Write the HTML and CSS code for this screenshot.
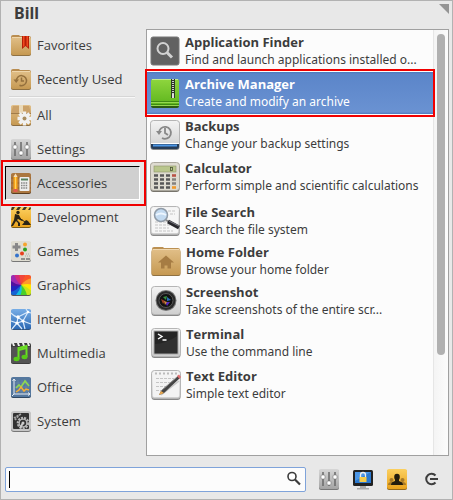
FILE: index.html
```html
<!DOCTYPE html>
<html lang="en">
<head>
<meta charset="utf-8">
<title>Applications</title>
<link rel="stylesheet" href="styles.css">
</head>
<body>
<svg class="defs" aria-hidden="true">
  <defs>
    <linearGradient id="tan" x2="0" y2="1"><stop stop-color="#e1bf88"/><stop offset="1" stop-color="#c69952"/></linearGradient>
    <linearGradient id="silver" x2="0" y2="1"><stop stop-color="#f4f4f4"/><stop offset="1" stop-color="#cfcfcf"/></linearGradient>
    <linearGradient id="grey" x2="0" y2="1"><stop stop-color="#d6d6d6"/><stop offset="1" stop-color="#a4a4a4"/></linearGradient>
    <linearGradient id="amber" x2="0" y2="1"><stop stop-color="#fbd060"/><stop offset="1" stop-color="#e9a21c"/></linearGradient>
    <linearGradient id="sky" x2="0" y2="1"><stop stop-color="#78aee6"/><stop offset="1" stop-color="#2c69b4"/></linearGradient>
    <linearGradient id="green" x2="0" y2="1"><stop stop-color="#8fd63e"/><stop offset="1" stop-color="#5cb41c"/></linearGradient>
    <clipPath id="round"><rect x="1" y="1" width="20" height="20" rx="2"/></clipPath>
  </defs>
  <symbol id="folder" viewBox="0 0 22 22">
    <path d="M1 3q0-2 2-2h6l1 1h9q2 0 2 2v5H1z" fill="#b98d50"/>
    <rect x="1" y="4" width="20" height="18" rx="2" fill="#8f7142"/>
    <rect x="1" y="3" width="20" height="18" rx="2" fill="url(#tan)"/>
    <path d="M2 3.500h18" stroke="#efd6ab"/>
  </symbol>
  <symbol id="mixer" viewBox="0 0 22 22">
    <rect x="1" y="2" width="20" height="20" rx="2" fill="#777"/>
    <rect x="1" y="1" width="20" height="20" rx="2" fill="url(#grey)"/>
    <path d="M5 4v14M11 4v14M17 4v14" stroke="#6a6a6a" stroke-width="1.500"/>
    <g fill="#fff" stroke="#777" stroke-width=".6"><rect x="3" y="7" width="4" height="4" rx="1"/><rect x="9" y="13" width="4" height="4" rx="1"/><rect x="15" y="7" width="4" height="4" rx="1"/></g>
  </symbol>
  <symbol id="tile" viewBox="0 0 30 30">
    <rect x=".5" y="1" width="29" height="29" rx="3" fill="#888"/>
    <rect x=".5" y=".5" width="29" height="28" rx="3" fill="url(#silver)" stroke="#b5b5b5"/>
  </symbol>
</svg>

<div class="window">
  <header class="top">
    <h1 class="user">Bill</h1>
    <svg class="grip" viewBox="0 0 10 10" aria-hidden="true"><path d="M0 0h10v10z" fill="#949494"/></svg>
  </header>

  <main class="content">
    <nav class="categories" aria-label="Categories">
      <button class="category" type="button">
        <svg class="cat-icon" viewBox="0 0 22 22"><use href="#folder"/><path d="M12 2h7v13l-3.500-3-3.500 3z" fill="#b51e08"/><path d="M13 2h1.500v10l-1.500 1zM16.500 2H18v11l-1.500-1z" fill="#f0491d"/></svg>
        Favorites</button>
      <button class="category" type="button">
        <svg class="cat-icon" viewBox="0 0 22 22"><use href="#folder"/><path d="M6.500 13a5 5 0 1 1 3 4.200" fill="none" stroke="#94703d" stroke-width="1.500"/><path d="M3.500 11.500h5.500L6.200 15z" fill="#94703d"/><path d="M11.500 9.500v3.500H14" fill="none" stroke="#94703d" stroke-width="1.500"/></svg>
        Recently Used</button>
      <hr class="separator">
      <button class="category" type="button">
        <svg class="cat-icon" viewBox="0 0 22 22"><rect x="1" y="2" width="20" height="20" rx="2" fill="#8b6c40"/><rect x="1" y="1" width="20" height="20" rx="2" fill="url(#tan)"/><path d="M1 9l2-7h16l2 7z" fill="#cba26a"/><path d="M9 1h4v10H9z" fill="#ead9b8"/><path d="M1 9.500h20" stroke="#a17c49"/><g transform="translate(14.500 14.500)"><g stroke="#f1f1f1" stroke-width="3.400"><path d="M0-7V7M-7 0H7M-5-5L5 5M5-5L-5 5"/></g><circle r="5" fill="#f1f1f1"/><circle r="2" fill="#a98d60"/></g></svg>
        All</button>
      <button class="category" type="button">
        <svg class="cat-icon" viewBox="0 0 22 22"><use href="#mixer"/></svg>
        Settings</button>
      <button class="category selected" type="button" aria-pressed="true">
        <svg class="cat-icon" viewBox="0 0 22 22"><rect x="1" y="2" width="20" height="20" rx="2" fill="#5c3c1c"/><rect x="1" y="1" width="20" height="20" rx="2" fill="#ab7740"/><path d="M1 6h20M1 11h20M1 16h20" stroke="#946331"/><path d="M3.500 5L5.500 1.500 7.500 5v13h-4z" fill="#f8a51b"/><path d="M5.500 5v13" stroke="#ffd15c"/><path d="M3.500 5l2-3.500 2 3.500z" fill="#f4dfbc"/><rect x="3.500" y="17" width="4" height="3" fill="#df5a4e"/><rect x="9.500" y="5" width="10" height="14" rx="1" fill="#eee"/><path d="M11 7.500h7" stroke="#54805c" stroke-width="2"/><path d="M11 11h7M11 13.500h7M11 16h7" stroke="#858585" stroke-width="1.300" stroke-dasharray="1.500 .8"/></svg>
        Accessories</button>
      <button class="category" type="button">
        <svg class="cat-icon" viewBox="0 0 22 22"><rect x="1" y="1" width="20" height="21" rx="2" fill="#7a5b16"/><rect x="1" y="1" width="20" height="20" rx="2" fill="url(#amber)"/><path d="M2 1h3L3 4H1zM8 1h3L9 4H6zM14 1h3l-2 3h-3zM20 1l1 1-1 2h-2z" fill="#41381f"/><circle cx="8" cy="6.500" r="1.700" fill="#292416"/><path d="M5 8l4 1 2 4 2 1-1 1-4-2-1 1 3 3v3H8v-3l-2-2-3 5H1l3-6z" fill="#292416"/><path d="M8 11l7 5" stroke="#292416"/><path d="M12 19l4-5 2 1 3 4z" fill="#292416"/></svg>
        Development</button>
      <button class="category" type="button">
        <svg class="cat-icon" viewBox="0 0 22 22"><rect x="1" y="2" width="20" height="20" rx="2" fill="#777"/><rect x="1" y="1" width="20" height="20" rx="2" fill="#dfddd2"/><path d="M6.500 3v8M2.500 7h8" stroke="#888" stroke-width="3"/><circle cx="15" cy="4.500" r="2" fill="#f6a42c"/><circle cx="15" cy="9.500" r="2" fill="#28a020"/><circle cx="12" cy="13.500" r="2" fill="#e8401c"/><circle cx="7" cy="15.500" r="2" fill="#3474cc"/><path d="M16 14h4M15 16h5" stroke="#aaa" stroke-dasharray="1 1"/><path d="M11 19h4M16 19h4" stroke="#777" stroke-width="1.500"/></svg>
        Games</button>
      <button class="category" type="button">
        <svg class="cat-icon" viewBox="0 0 22 22"><rect x="1" y="2" width="20" height="20" rx="2" fill="#555"/><g clip-path="url(#round)"><path d="M11 11Q8 5 9 0h7z" fill="#f1453b"/><path d="M11 11Q13 4 16 0h6v4z" fill="#fa5428"/><path d="M11 11q5-6 11-7v7z" fill="#ff9a2b"/><path d="M11 11q7-2 11 0v7z" fill="#ffe600"/><path d="M11 11q6 1 11 7v4h-5z" fill="#c7e51a"/><path d="M11 11q5 4 6 11h-7z" fill="#49cf28"/><path d="M11 11q2 5-1 11H5z" fill="#16bfdc"/><path d="M11 11q-1 6-6 11H0v-4z" fill="#1562d4"/><path d="M11 11Q6 17 0 18v-7z" fill="#2423bd"/><path d="M11 11Q4 13 0 11V6z" fill="#5112a0"/><path d="M11 11Q4 10 0 6V0h4z" fill="#9b2bb3"/><path d="M11 11Q6 7 4 0h5z" fill="#d42a7a"/></g></svg>
        Graphics</button>
      <button class="category" type="button">
        <svg class="cat-icon" viewBox="0 0 22 22"><rect x="1" y="2" width="20" height="20" rx="2" fill="#31547f"/><rect x="1" y="1" width="20" height="20" rx="2" fill="url(#sky)"/><g fill="none" stroke="#d9eafc" stroke-width="1.200"><path d="M1 5q4 4 7 4l10-5M8 9l5 4 8 3M8 9l-1 6-5 6M18 4l-5 9-6 2-6-2M13 13l2 8M18 4l-2-3M7 15l5 6M18 4l3 1"/></g><g fill="#fff"><circle cx="8" cy="9" r="1.700"/><circle cx="18" cy="4" r="1.300"/><circle cx="13" cy="13" r="1.600"/><circle cx="7" cy="15" r="1.600"/></g></svg>
        Internet</button>
      <button class="category" type="button">
        <svg class="cat-icon" viewBox="0 0 22 22"><rect x="1" y="1" width="20" height="21" rx="2" fill="#3d3d3d"/><rect x="1" y="5" width="20" height="16" rx="1" fill="#535353"/><path d="M2 1h2l1 3H3zM7 1h2l1 3H8zM12 1h2l1 3h-2zM17 1h2l1 3h-2z" fill="#eee"/><path d="M8.500 17V6l8-2v11" fill="none" stroke="#6ae022" stroke-width="2"/><path d="M8.500 8l8-2" stroke="#6ae022" stroke-width="2"/><ellipse cx="6.500" cy="17" rx="3" ry="2.200" fill="#57cb18"/><ellipse cx="14.500" cy="15" rx="3" ry="2.200" fill="#57cb18"/></svg>
        Multimedia</button>
      <button class="category" type="button">
        <svg class="cat-icon" viewBox="0 0 22 22"><rect x="1" y="2" width="20" height="20" rx="2" fill="#304863"/><rect x="1" y="1" width="20" height="20" rx="2" fill="#54779e"/><path d="M8 4v14M12 4v14M16 4v14M4 7h15M4 11h15M4 15h15" stroke="#6b8aac" stroke-width=".7"/><path d="M4 3v15h16M2.500 5L4 3l1.500 2M18 16.500l2 1.500-2 1.500M4 18l-2 2" fill="none" stroke="#e7edf3"/><path d="M6 12l3-3 2 2 4-6 4 5" fill="none" stroke="#8fd752" stroke-width="1.700"/><path d="M6 16l3-2 2-3 3 4 2-2 3 1" fill="none" stroke="#f7ae34" stroke-width="1.500"/></svg>
        Office</button>
      <button class="category" type="button">
        <svg class="cat-icon" viewBox="0 0 22 22"><rect x="1" y="2" width="20" height="20" rx="3" fill="#777"/><rect x="1" y="1" width="20" height="20" rx="3" fill="#c6c6c6"/><rect x="3" y="3" width="16" height="16" rx="1" fill="#333"/><circle cx="13" cy="13" r="5" fill="none" stroke="#b5b5b5" stroke-width="2.600" stroke-dasharray="2 1"/><circle cx="13" cy="13" r="3.800" fill="none" stroke="#b5b5b5" stroke-width="1.300"/><path d="M13 13l-3 5" stroke="#ccc" stroke-width="2"/><circle cx="13" cy="13" r="1.500" fill="#ccc"/><path d="M4 8l7-4M5 10l4-5" stroke="#a5a5a5" stroke-width="1.800" stroke-dasharray="2 1"/></svg>
        System</button>
    </nav>

    <section class="panel" aria-label="Accessories">
      <div class="apps">
        <button class="app" type="button">
          <svg class="app-icon" viewBox="0 0 30 30"><rect x="1" y="1" width="28" height="28" rx="2" fill="#626262" stroke="#777"/><circle cx="13" cy="12.500" r="5.500" fill="none" stroke="#d2d2d2" stroke-width="2"/><path d="M17 16.500l5 5" stroke="#d2d2d2" stroke-width="3"/></svg>
          <span class="label"><strong>Application Finder</strong><span>Find and launch applications installed o...</span></span></button>
        <button class="app active" type="button">
          <svg class="app-icon" viewBox="0 0 30 30"><rect x="1" y="2" width="28" height="28" rx="2" fill="#2c5c11"/><rect x="1" y="1" width="28" height="27" rx="2" fill="url(#green)"/><path d="M2 1.500h26" stroke="#c5ed91"/><path d="M1 23.500h28M1 26.500h28" stroke="#3f8a13"/><path d="M1 24.500h28M1 27.500h28" stroke="#94d750"/><path d="M21 1h4v19h-4z" fill="#2b3b24"/><path d="M23 1v16" stroke="#ccc" stroke-width="2" stroke-dasharray="1 1"/><rect x="22" y="16" width="2" height="4" fill="#ddd"/></svg>
          <span class="label"><strong>Archive Manager</strong><span>Create and modify an archive</span></span></button>
        <button class="app" type="button">
          <svg class="app-icon" viewBox="0 0 30 30"><use href="#tile"/><path d="M1 24h28v3q0 2-2 2H3q-2 0-2-2z" fill="#263d59"/><path d="M3 25.500h24" stroke="#4c97e6" stroke-width="2"/><path d="M1 23.500h28" stroke="#fff"/><path d="M9 13a6 6 0 1 1 3 5" fill="none" stroke="#888" stroke-width="1.800"/><path d="M6 11h6l-3 4z" fill="#888"/><path d="M15 8v5l3 2" fill="none" stroke="#888" stroke-width="1.800"/></svg>
          <span class="label"><strong>Backups</strong><span>Change your backup settings</span></span></button>
        <button class="app" type="button">
          <svg class="app-icon" viewBox="0 0 30 30"><rect x=".5" y="1" width="29" height="29" rx="3" fill="#77746c"/><rect x=".5" y=".5" width="29" height="28" rx="3" fill="#dedbd0" stroke="#aaa79d"/><rect x="4" y="4" width="22" height="6" fill="#b9c68c" stroke="#8c9369" stroke-width=".6"/><rect x="20.500" y="5.500" width="2" height="3" fill="none" stroke="#4b5438" stroke-width=".8"/><path d="M4 13.500h16M4 17.500h16M4 21.500h16M4 25.500h16" stroke="#575757" stroke-width="2.600" stroke-dasharray="4 2"/><path d="M22 13.500h4" stroke="#b95346" stroke-width="2.600"/><path d="M22 17.500h4M22 21.500h4" stroke="#85827d" stroke-width="2.600"/><path d="M22 25.500h4" stroke="#f19a2b" stroke-width="2.600"/></svg>
          <span class="label"><strong>Calculator</strong><span>Perform simple and scientific calculations</span></span></button>
        <button class="app" type="button">
          <svg class="app-icon" viewBox="0 0 30 30"><use href="#tile"/><rect x="2" y="2" width="26" height="25" rx="1" fill="#f6f6f6"/><path d="M5 16h12M5 19h18M5 22h14M5 25h18M18 5h7M20 8h5" stroke="#c4c4c4" stroke-dasharray="3 1"/><circle cx="11" cy="9" r="6.500" fill="#c3daf0" stroke="#909ba7" stroke-width="1.500"/><path d="M6 9q5-3 10 0" fill="none" stroke="#edf6ff" stroke-width="2"/><path d="M16 14l3 2" stroke="#888" stroke-width="2"/><path d="M18 15.500l11 6" stroke="#28282d" stroke-width="4"/><path d="M19 15l10 5" stroke="#7e7e86"/></svg>
          <span class="label"><strong>File Search</strong><span>Search the file system</span></span></button>
        <button class="app shifted" type="button">
          <svg class="app-icon" viewBox="0 0 30 30"><path d="M1 3q0-2 2-2h9l1 1h14q2 0 2 2v5H1z" fill="#bb9052"/><rect x=".5" y="4" width="29" height="26" rx="2" fill="#8f7142"/><rect x=".5" y="3" width="29" height="26" rx="2" fill="url(#tan)"/><path d="M2 3.500h26" stroke="#efd7af"/><path d="M15 9.500l8 7h-3v6h-3.500v-3h-3v3H10v-6H7z" fill="#a67c43"/></svg>
          <span class="label"><strong>Home Folder</strong><span>Browse your home folder</span></span></button>
        <button class="app shifted" type="button">
          <svg class="app-icon" viewBox="0 0 30 30"><use href="#tile"/><circle cx="15" cy="14.500" r="10.500" fill="#777"/><circle cx="15" cy="14.500" r="9.500" fill="#292929"/><circle cx="15" cy="14.500" r="7" fill="#111" stroke="#555"/><path d="M12 11l4-1-1 4z" fill="#388f43"/><path d="M16 11l4 3-4 1z" fill="#286eb5"/><path d="M10 13l4 2-2 3z" fill="#9b3f25"/><path d="M14 16l5 0-3 4z" fill="#5529bb"/><path d="M13 15l3 1-2 3z" fill="#d28b39"/></svg>
          <span class="label"><strong>Screenshot</strong><span>Take screenshots of the entire scr...</span></span></button>
        <button class="app shifted" type="button">
          <svg class="app-icon" viewBox="0 0 30 30"><use href="#tile"/><rect x="3" y="3" width="24" height="23" fill="#252525" stroke="#aaa"/><path d="M4 16q12-1 22-8v17H4z" fill="#303030"/><path d="M7 6l4 2.500L7 11M11.500 12h4" fill="none" stroke="#fff" stroke-width="1.400"/></svg>
          <span class="label"><strong>Terminal</strong><span>Use the command line</span></span></button>
        <button class="app shifted" type="button">
          <svg class="app-icon" viewBox="0 0 30 30"><use href="#tile"/><rect x="2" y="2" width="26" height="25" rx="1" fill="#f3f3f3"/><path d="M4 3.500h23" stroke="#bbb" stroke-width="2" stroke-dasharray="2 2"/><path d="M5 8.500h18M5 12.500h15M5 16.500h12M5 20.500h7" stroke="#c5c5c5" stroke-dasharray="3 1"/><path d="M10 25l18-14" stroke="#999" stroke-width="1.500" opacity=".5"/><path d="M8 25l2-4L27 6l2 2-16 15z" fill="#444"/><path d="M11 20L26 7" stroke="#888"/><path d="M26 6l2-1.500 2 2.500-1.500 2z" fill="#de6e70"/><path d="M8 25l2-4 3 2z" fill="#eba84d"/></svg>
          <span class="label"><strong>Text Editor</strong><span>Simple text editor</span></span></button>
      </div>
      <div class="track" aria-hidden="true"><div class="thumb"></div></div>
    </section>
  </main>

  <footer class="bottom">
    <div class="search">
      <input class="search-box" type="text" aria-label="Search applications">
      <span class="caret" aria-hidden="true"></span>
      <svg class="search-icon" viewBox="0 0 16 16" aria-hidden="true"><circle cx="6" cy="5.500" r="4" fill="#fff" stroke="#3c3c3c" stroke-width="1.600"/><path d="M9 8.500l5 5" stroke="#3c3c3c" stroke-width="2.200"/></svg>
    </div>
    <div class="actions">
      <button class="action" type="button" aria-label="All Settings"><svg viewBox="0 0 22 22"><use href="#mixer"/></svg></button>
      <button class="action" type="button" aria-label="Lock Screen"><svg viewBox="0 0 22 22"><rect x="1" y="2" width="20" height="16" rx="1.500" fill="#222"/><rect x="3" y="4" width="16" height="11" fill="#2b79d0"/><path d="M3 4h16L3 13z" fill="#4b96e6"/><path d="M8.500 9V7a2.500 2.500 0 0 1 5 0v2" fill="none" stroke="#eee" stroke-width="1.300"/><rect x="7.500" y="9" width="7" height="5" fill="#f5cb4a"/><path d="M8 18h6v2h3v1.500H5V20h3z" fill="#aaa"/></svg></button>
      <button class="action" type="button" aria-label="Switch Users"><svg viewBox="0 0 22 22"><rect x="1" y="2" width="20" height="20" rx="2" fill="#93681b"/><rect x="1" y="1" width="20" height="20" rx="2" fill="url(#amber)"/><g fill="#a87926"><circle cx="5.500" cy="12" r="2"/><circle cx="16.500" cy="12" r="2"/><path d="M2 17q0-3 3.500-3T9 17zM13 17q0-3 3.500-3t3.500 3z"/></g><ellipse cx="11" cy="9" rx="2.800" ry="3.300" fill="#231c0d"/><path d="M5 17q0-3 4-4v-2h4v2q4 1 4 4z" fill="#231c0d"/></svg></button>
      <button class="action" type="button" aria-label="Log Out"><svg viewBox="0 0 22 22"><path d="M15.500 7.500a5.300 5.300 0 1 0 0 7" fill="none" stroke="#3e3e3e" stroke-width="2"/><path d="M10 11h8" stroke="#3e3e3e" stroke-width="2"/></svg></button>
    </div>
  </footer>
</div>
</body>
</html>
```
FILE: styles.css
```css
* {
  box-sizing: border-box;
}

body {
  margin: 0;
  background: #e8e8e8;
  color: #3c3c3c;
  font: 12px/17px "Noto Sans", "Open Sans", sans-serif;
}

button {
  font: inherit;
  color: inherit;
  text-align: left;
  border: 0;
  padding: 0;
  background: none;
}

svg {
  display: block;
}

.defs {
  position: absolute;
  width: 0;
  height: 0;
}

.window {
  display: flex;
  flex-direction: column;
  min-height: 100vh;
  border: 1px solid #b2b2b2;
}

.top {
  display: flex;
  justify-content: space-between;
  align-items: flex-start;
  height: 28px;
  padding: 3px 3px 0 13px;
}

.user {
  margin: 0;
  font-size: 16px;
  line-height: 18px;
}

.grip {
  width: 10px;
  height: 10px;
}

.content {
  flex: 1;
  display: grid;
  grid-template-columns: 145px minmax(0, 1fr);
  padding-right: 3px;
}

.categories {
  display: flex;
  flex-direction: column;
  margin-top: -1px;
  padding: 0 6px 0 4px;
}

.category {
  position: relative;
  display: flex;
  align-items: center;
  gap: 5px;
  height: 34px;
  padding: 0 4px;
  border: 1px solid transparent;
  font-family: "Open Sans", "Noto Sans", sans-serif;
  font-size: 13px;
}

.category.selected {
  background: #d0d0d0;
  border-color: #000 #fff #fff #000;
}

.category.selected::after,
.app.active::after {
  content: "";
  position: absolute;
  z-index: 1;
  border: 2px solid #f00000;
}

.category.selected::after {
  inset: -7px -7px -7px -5px;
}

.app.active::after {
  inset: -3px -2px;
}

.cat-icon {
  flex: none;
  width: 22px;
  height: 22px;
}

.separator {
  width: 126px;
  height: 2px;
  margin: 0 0 0 4px;
  border: 0;
  border-top: 1px solid #d6d6d6;
  border-bottom: 1px solid #f8f8f8;
}

.panel {
  display: flex;
  border: 1px solid #a0a0a0;
  background: #fcfcfc;
}

.apps {
  flex: 1;
  min-width: 0;
  display: grid;
  grid-template-rows: 42px 42px 42px 44px 40px 40px 42px 42px 42px;
}

.app {
  position: relative;
  display: flex;
  align-items: center;
  gap: 5px;
  min-width: 0;
  height: 42px;
  padding: 0 3px;
}

.app.shifted {
  padding-left: 4px;
}

.app.active {
  color: #fff;
  background: linear-gradient(#4c78bd, #5b85c9 2px, #6a92d2 40px, #4c78bd);
}

.app-icon {
  flex: none;
  width: 30px;
  height: 30px;
}

.label {
  display: flex;
  flex-direction: column;
  white-space: nowrap;
}

.label strong {
  font-family: "Open Sans", "Noto Sans", sans-serif;
  font-size: 13px;
}

.track {
  width: 15px;
  padding: 4px 3px;
  border-left: 1px solid #e6e6e6;
  background: linear-gradient(to right, #f4f4f4, #fcfcfc);
}

.thumb {
  width: 8px;
  height: 77%;
  border-radius: 4px;
  background: #b0b0b0;
}

.bottom {
  display: flex;
  align-items: center;
  gap: 10px;
  padding: 10px 8px 7px 4px;
}

.search {
  position: relative;
  flex: 1;
}

.search-box {
  display: block;
  width: 100%;
  height: 25px;
  padding: 0 24px 0 6px;
  border: 1px solid #7fa3da;
  border-radius: 2px;
  background: #fcfcfc;
  font: inherit;
}

.caret {
  position: absolute;
  left: 4px;
  top: 4px;
  width: 1px;
  height: 17px;
  background: #000;
}

.search-icon {
  position: absolute;
  right: 4px;
  top: 4px;
  width: 16px;
  height: 16px;
}

.actions {
  display: flex;
  gap: 8px;
}

.action {
  width: 26px;
  padding: 2px;
}

.action svg {
  width: 22px;
  height: 22px;
}
```
